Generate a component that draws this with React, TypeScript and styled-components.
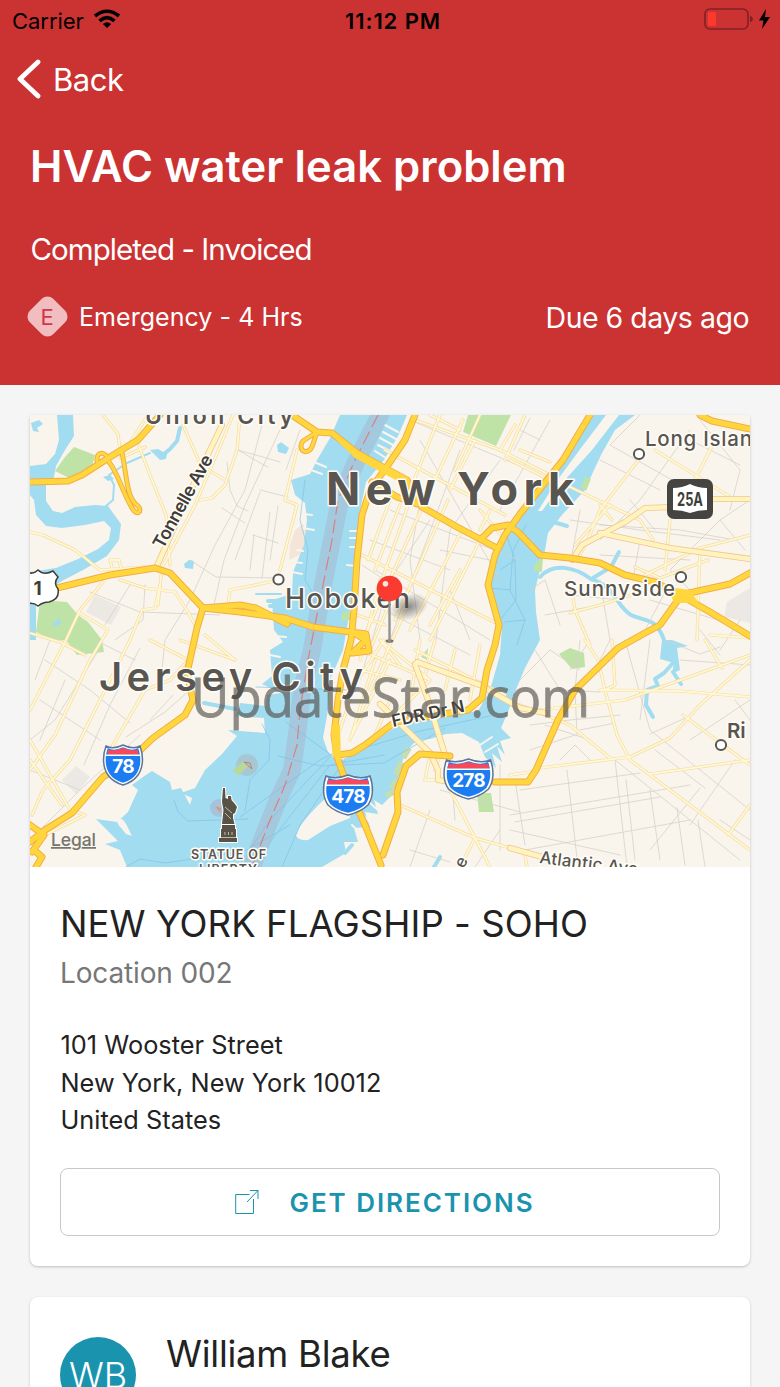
import styled, { createGlobalStyle } from "styled-components";

const WATER = "#a2dcf0";
const LAND = "#f9f5ed";

const waterShapes = [
  // hudson, upper bay and east river
  "M340 415 L407 415 L398 436 L384 460 L366 482 L359 515 L355 560 L352 600 L343 650 L330 680 L328 710 L323 738 L328 752 L338 762 L368 746 L398 725 L440 717 L478 711 L490 690 L500 655 L502 625 L490 600 L487 575 L498 550 L510 530 L522 508 L547 478 L570 449 L594 415 L635 415 L615 430 L601 455 L594 470 L585 490 L562 515 L548 533 L545 550 L541 566 L535 590 L536 612 L540 640 L525 668 L515 692 L508 712 L501 728 L511 738 L500 741 L505 755 L497 746 L502 762 L492 753 L496 768 L485 757 L479 742 L462 733 L446 734 L430 739 L416 741 L405 752 L399 775 L392 795 L382 805 L374 800 L378 814 L365 812 L370 827 L354 828 L358 842 L344 842 L346 853 L322 867 L127 867 L120 850 L105 844 L118 841 L107 830 L96 819 L117 822 L128 812 L138 790 L132 785 L143 777 L152 771 L170 782 L172 790 L181 788 L190 805 L192 798 L181 793 L195 788 L205 770 L222 754 L237 736 L228 730 L265 733 L264 718 L236 716 L240 703 L266 706 L267 695 L281 693 L262 684 L272 676 L270 650 L283 642 L274 630 L272 600 L292 594 L293 572 L304 545 L307 520 L305 503 L295 495 L291 480 L310 474 L317 460 L330 438 Z",
  // hackensack
  "M57 415 L73 415 L74 436 L65 450 L56 466 L54 477 L46 484 L46 501 L53 511 L62 513 L75 507 L95 505 L108 506 L121 524 L119 540 L107 556 L83 570 L60 582 L50 590 L30 590 L30 572 L56 568 L78 559 L98 549 L109 540 L111 528 L104 521 L85 525 L62 528 L46 526 L36 515 L34 500 L30 495 L30 466 L46 464 L55 454 L59 440 Z",
  "M30 604 L36 600 L36 640 L30 640 Z",
  "M31 423 L39 420 L43 424 L37 428 L39 432 L33 431 Z",
  "M150 450 L158 449 L167 454 L166 459 L160 460 Z",
  "M103 477 L110 475 L114 479 L108 481 Z",
  "M184 564 L189 560 L194 561 L193 569 L185 568 Z",
  "M277 445 L281 442 L289 448 L286 454 L278 452 Z",
  "M662 640 L672 640 L688 646 L677 648 L680 670 L672 674 L674 663 L660 659 Z",
];

const shoreLand = [
  // roosevelt island
  "M606 415 L619 415 L592 450 L563 482 L542 511 L538 511 L556 482 L581 448 Z",
  "M297 833 C299 826 310 812 326 798 L350 802 L350 818 L330 826 L308 840 C300 841 294 837 297 833 Z",
  "M117 820 C124 815 127 827 132 836 L126 834 C121 827 117 825 117 820 Z",
];

const parks = [
  "M55 471 L65 457 L74 447 L95 455 L92 467 L69 478 Z",
  "M40 600 L67 602 L78 615 L88 622 L102 640 L104 652 L77 655 L66 640 L55 641 L36 632 Z",
  "M468 415 L511 415 L496 446 L463 432 Z",
  "M559 654 L570 648 L584 653 L585 667 L572 669 Z",
  "M477 793 L491 793 L494 812 L479 812 Z",
  "M342 612 L350 611 L351 620 L342 621 Z",
  "M581 487 L585 477 L591 479 L586 491 Z",
  "M534 565 L543 556 L542 572 L534 571 Z",
  "M421 657 L428 648 L427 660 Z",
];

// brooklyn bridge park piers
const pierParks = "M409 748 L403 758 M401 762 L396 775 M397 780 L391 788 M393 792 L386 796";

const greyBlocks = [
  "M86 612 L95 595 L121 607 L111 625 Z",
  "M727 602 L750 588 L750 623 L724 617 Z",
  "M62 780 L76 766 L90 777 L76 794 Z",
];

const creeks = [
  "M180 428 L177 441 L170 449 L164 454",
  "M540 577 C553 562 575 567 591 579 C617 588 615 605 631 615 C646 622 656 617 664 640",
  "M593 578 L611 567 L619 552",
  "M673 663 L664 673 L655 679 L658 686 L647 690 L646 705 L653 717",
  "M673 672 L681 684",
  "M553 522 L567 526",
];

const ferryRoutes = [
  "M174 800 L178 812 L188 821 L248 819",
  "M262 724 L270 740 L269 760 L250 780 L245 811",
  "M126 867 L140 859 L165 863 L245 851 L290 825",
  "M240 817 L320 760 L336 752",
  "M238 867 L270 820 L330 757",
  "M282 867 L300 825 L345 760",
  "M270 842 L330 765 L384 755",
  "M286 722 L334 757 L420 731 L490 716",
  "M278 756 L320 766 L384 763 L445 728",
  "M256 687 L350 690",
  "M503 525 L515 560 L516 600 L500 620",
  "M526 525 L513 551 L510 590 L525 620 L517 645",
  "M515 560 L500 570 M510 590 L490 588 M525 620 L505 622",
  "M305 480 L300 520 L308 550 L305 580 L317 600",
];

const streets = [
  "M238 450 L262 464 L268 467 M227 462 L230 490 L237 506 L248 511",
  "M262 425 L245 490 L215 545 L190 600 L165 640 L160 690",
  "M280 430 L245 505 L224 560 L214 605 M238 450 L280 462",
  "M222 508 L245 523 M260 490 L288 497 M190 560 L216 577 L280 578",
  "M260 492 L235 560 M253 535 L278 543 M250 570 L254 535 M270 512 L262 578 M278 506 L270 560",
  "M90 592 L140 612 L220 615 M145 585 L143 620 L115 640 M130 585 L105 625",
  "M50 640 L35 680 M45 660 L90 690 L130 723 M100 648 L55 720 L30 740",
  "M40 700 L100 740 M95 640 L135 660 M150 720 L173 695 M126 737 L165 712 L190 690",
  "M140 648 L110 705 L84 765 M65 680 L40 740 M30 770 L80 790",
  "M300 430 L286 470 M30 840 L80 790 L140 735",
  "M410 420 L530 470 M420 440 L500 580 M390 510 L520 560 M370 540 L450 570",
  "M362 565 L400 590 M430 520 L390 580 L360 680 M450 590 L470 640",
  "M440 550 L490 560 M420 500 L410 560 L420 640 M460 450 L390 640",
  "M500 460 L450 530 L436 640 M375 570 L490 640 M365 600 L470 655",
  "M530 418 L514 450 M550 420 L500 510 M540 440 L520 430",
  "M640 415 L610 445 L690 490 M600 460 L660 490 M690 430 L640 500 L600 540",
  "M700 420 L740 470 L730 510 M690 440 L740 465 M750 500 L720 520 L745 550",
  "M570 520 L640 530 L720 540 M580 510 L572 555 M630 500 L655 530",
  "M600 525 L680 530 L735 540 M600 555 L690 560",
  "M640 540 L633 580 M720 520 L670 570 L690 590 M530 590 L545 580 L560 625",
  "M570 595 L620 600 M545 615 L600 605 M600 580 L610 640 L590 680",
  "M665 592 L640 640 M650 600 L735 625 M700 630 L720 655 M740 620 L720 650",
  "M520 680 L550 650 L580 670 M535 650 L560 690 L600 692",
  "M580 640 L575 690 L577 735 M625 640 L650 730 L750 810 M680 660 L750 665",
  "M530 725 L570 720 L620 715 M580 730 L615 723 M560 760 L575 745 L590 760",
  "M520 790 L640 773 M510 815 L690 785 M515 822 L660 797 M525 850 L690 820",
  "M515 780 L525 845 M567 770 L578 867 M615 760 L627 867 M626 780 L635 860",
  "M650 790 L660 860 M677 808 L685 865 M698 820 L705 867 M615 760 L740 860",
  "M690 740 L750 700 M735 760 L690 825 M655 750 L705 788 M720 820 L750 840",
  "M650 640 L640 720 M500 765 L500 850 M440 790 L520 812 M430 810 L410 867",
  "M450 755 L455 820 M410 850 L450 862 M500 830 L475 867 M510 830 L620 855",
  "M650 734 L690 716 M665 640 L700 654 L720 647 M590 640 L570 670",
  "M545 725 L590 740 M735 700 L750 720 M700 788 L650 850 M530 750 L575 735",
];

const minorRoads = [
  "M103 415 L118 434 L121 458 L145 447 M148 415 L120 458",
  "M139 446 L150 475 L166 515 L170 565",
  "M183 425 L205 475 M240 415 L237 450 L225 485 L212 498 L200 500",
  "M233 415 L208 475 L195 505 L162 568 L158 605",
  "M212 472 L225 480",
  "M30 532 L43 535 L75 550 L100 570 L145 567 M103 582 L80 610 L66 640 L30 710",
  "M112 568 L110 560 L119 560 L121 568 M160 585 L155 608 L142 610 L130 640 L70 760 L43 790 L32 815",
  "M78 612 L108 630 L90 660 L55 735 L30 770",
  "M30 633 L60 642 L85 655 M120 580 L145 588 L175 592 L188 612 L195 625",
  "M230 590 L280 580 M230 590 L227 612 M180 640 L235 660 L205 635",
  "M150 640 L188 660 L170 680 L145 690 L110 750",
  "M30 740 L70 810 L85 815 L45 835 M30 760 L62 805",
  "M297 450 L285 500 L297 505 L280 570",
  "M415 420 L500 450 L550 475 M480 415 L455 470 M440 415 L410 490",
  "M463 420 L430 490 M475 440 L450 490 M430 415 L460 430 M500 450 L515 425",
  "M510 460 L550 480 M520 450 L550 462 M525 415 L505 460",
  "M385 450 L440 480 L505 515 M430 490 L365 635 M448 500 L395 620",
  "M462 530 L410 630 M390 500 L368 560 M400 505 L375 570",
  "M362 555 L500 625 M410 500 L382 580 M480 540 L430 640",
  "M460 570 L430 625 M480 510 L505 540 M490 510 L480 530",
  "M380 580 L360 660 M395 590 L370 650 M410 600 L370 690",
  "M357 615 L385 625 M360 650 L430 680 M380 640 L430 680 L400 710",
  "M375 660 L350 740 M390 660 L352 735 M400 680 L360 670 L340 730",
  "M415 650 L505 695 M420 640 L410 700 L395 715 M455 650 L445 690",
  "M435 640 L425 675 M480 645 L470 700 M400 665 L380 640",
  "M640 458 L600 510 L590 535 L580 555 M570 487 L640 520 L653 540",
  "M610 505 L575 545 M600 505 L612 520 M655 450 L735 500",
  "M715 440 L690 490 M670 520 L665 570",
  "M645 575 L700 548 L750 535 M700 548 L697 640 M635 567 L660 578 L708 560",
  "M570 580 L575 610 L590 645 M570 613 L600 605 L640 592",
  "M585 640 L598 660 L605 690 L617 735 L630 760 L750 850",
  "M612 640 L615 685 L605 690 M600 690 L680 691 L750 697",
  "M540 710 L625 700 L750 655 M540 768 L630 757 L670 738 L700 705 L750 660",
  "M705 640 L722 668 M683 715 L750 765 M650 774 L750 760 M728 835 L750 805",
  "M510 775 L530 772 M520 705 L570 725 L610 758",
  "M430 755 L425 780 L440 780 M440 755 L435 770 M400 805 L475 838 L570 865",
  "M450 790 L475 838 L490 867 M475 838 L460 867 M525 855 L527 867",
  "M390 700 L375 735 M384 640 L345 700 M710 635 L750 638",
];

const mainRoads = [
  "M222 425 L190 492 L156 568",
  "M415 664 L428 700 L445 755",
  "M417 662 L480 685 L520 708 L545 713",
  "M380 704 L430 753 L438 770 L438 780 L450 782",
  "M572 560 L582 545 L625 522 L645 508 L675 507 M713 499 L750 499",
  "M600 533 L670 548 L750 559",
  "M510 848 L560 862",
];

const highways = [
  "M30 482 L68 481 L82 475 L110 457 L138 440 L160 415",
  "M57 588 L110 575 L155 568 L170 573 L203 608 L240 605 L256 608 L287 624",
  "M203 608 L240 612 L285 618 L313 627 L366 634 L369 651 L352 653 L366 640 L352 632",
  "M203 608 L197 628 L187 673 L193 700 L185 715 L153 738 L130 760 L103 777 L72 813 L45 830 L30 842",
  "M292 415 L317 432 L332 433 L357 453 L407 480 L422 507 L457 527 L495 547",
  "M372 482 L397 497 L417 504",
  "M415 415 L405 440 L388 465 L370 490 L362 515 L357 560 L354 610 L351 640 L343 670 L338 700 L334 735 L337 757 L347 785 L365 825 L381 865",
  "M590 415 L563 460 L547 480 L520 514 L505 535 L495 555 L488 585 L499 625 L495 645 L487 670 L482 698 L468 710 L420 718 L395 722 L365 745 L352 753 L338 755",
  "M482 538 L492 528 L508 525 L518 532 L540 555 L570 558 L600 563 L625 575 L655 582 L680 595 L710 612 L750 636",
  "M680 595 L730 584 L750 573",
  "M680 597 L660 625 L645 633 L618 648 L575 690 L558 720 L536 770 L528 782 L495 782",
  "M450 756 L420 754 L406 766 L397 792 L398 812 L383 855",
  "M700 415 L712 421 L750 429",
  "M30 825 L44 835 L32 852 M34 850 L42 857 L36 867",
];

const ramps = [
  "M97 461 C96 450 107 451 109 462 C119 475 122 491 132 508 C137 517 143 511 138 506 C126 498 127 475 122 453",
  "M317 432 L303 441 C296 450 309 458 313 444 L317 432",
];

const shields = [
  { x: 123, y: 765, w: 40, label: "78" },
  { x: 348, y: 795, w: 50, label: "478" },
  { x: 468.5, y: 779, w: 50, label: "278" },
];

const dots = [
  [278.5, 579.5],
  [639, 454],
  [681, 577],
  [721, 745],
];

const Shield = ({ x, y, w, label }: (typeof shields)[number]) => {
  const h = w / 2;
  const body = `M${-h + 3} -19 Q${-h / 2} -15 0 -20 Q${h / 2} -15 ${h - 3} -19 C${h + 1} -8 ${h} 3 ${h - 5} 10 Q${h / 2} 17 0 20 Q${-h / 2} 17 ${-h + 5} 10 C${-h} 3 ${-h - 1} -8 ${-h + 3} -19 Z`;
  return (
    <g transform={`translate(${x} ${y})`}>
      <path d={body} fill="#fff" stroke="#5d7599" strokeWidth="1.5" />
      <path d={body} fill="#1c7cf2" transform="scale(.89)" />
      <path
        d={`M${-h + 5} -15.5 Q${-h / 2} -13 0 -17 Q${h / 2} -13 ${h - 5} -15.5 L${h - 4.5} -10.5 H${-h + 4.5} Z`}
        fill="#f9485a"
      />
      <path d={`M${-h + 3} -9.7 H${h - 3}`} stroke="#fff" strokeWidth="1.5" />
      <ShieldText y={7.5}>{label}</ShieldText>
    </g>
  );
};

const CityMap = () => (
  <MapSvg viewBox="30 415 720 452" role="img" aria-label="Map">
    <rect x="30" y="415" width="720" height="452" fill={LAND} />
    {greyBlocks.map((d) => (
      <path key={d} d={d} fill="#ece9e4" />
    ))}
    <path d="M295 530 L303 524 L309 540 L304 553 L289 560 L290 545 Z" fill="#f3e6d8" />
    {waterShapes.map((d) => (
      <path key={d} d={d} fill={WATER} />
    ))}
    {shoreLand.map((d) => (
      <path key={d} d={d} fill={LAND} />
    ))}
    {parks.map((d) => (
      <path key={d} d={d} fill="#bfe3a6" />
    ))}
    <path d={pierParks} stroke="#c3dfb0" strokeWidth="6" />
    <path d="M52 624 L60 618 L61 623 L55 627 Z" fill={WATER} />

    {/* piers */}
    <Lines stroke={LAND} strokeWidth="2">
      <path d="M385 425 L398 432 M383 432 L396 439 M380 438 L393 445 M378 445 L390 451 M375 451 L386 458 M314 462 L326 467 M311 470 L322 474 M304 514 L312 515 M303 528 L314 530 M297 550 L303 551 M294 562 L302 563 M292 572 L302 574 M350 531 L360 531 M350 538 L360 538 M350 547 L358 547 M347 565 L356 566" />
      <path d="M480 745 L492 737 M485 752 L498 744 M370 803 L380 812 M361 813 L371 823 M352 825 L362 835" />
      <path d="M274 636 L286 637 M270 655 L280 657 M270 606 L280 607" />
    </Lines>

    <Lines stroke={WATER} strokeWidth="4">
      {creeks.map((d) => (
        <path key={d} d={d} />
      ))}
      <path d="M268 601 H281 M270 606 H282 M204 703 L235 709 M345 853 L352 845 M434 867 L440 857" />
    </Lines>
    <Lines stroke={WATER} strokeWidth="2">
      <path d="M150 453 L127 463 L109 475 L114 485 L113 500 L106 506 M256 594 H281" />
    </Lines>
    <Lines stroke="#7fc2e6" strokeWidth="0.9" opacity="0.75">
      {ferryRoutes.map((d) => (
        <path key={d} d={d} />
      ))}
    </Lines>

    {/* state line down the river */}
    <Lines stroke="#a6abc6" strokeWidth="18" opacity="0.42">
      <path d="M380 415 L356 462 L340 500 L332 540 L324 580 L317 620 L312 650 L302 690 L297 735 L292 770 L278 800 L262 840 L252 867" />
    </Lines>
    <Lines stroke="#d8817f" strokeWidth="1.2" strokeDasharray="13 6">
      <path d="M378 415 L354 462 L338 500 L332 540 L323 585 L315 625 L308 660 L300 710 L297 745 L285 785 L270 820 L252 867" />
    </Lines>
    <circle cx="247" cy="765" r="11" fill="#a9b8ba" opacity="0.55" />
    <path d="M233 770 L243 762 L248 766 L238 776 Z" fill="#b9d99b" />
    <path d="M244 762 L250 763 L252 769 Z" fill="none" stroke="#c98268" />
    <circle cx="219" cy="808" r="9" fill="#a9a9c8" opacity="0.5" />
    <path d="M215 806 L221 808 L220 813 Z" fill="#d99a79" />

    <Lines stroke="#d6d2ca" strokeWidth="0.8">
      {streets.map((d) => (
        <path key={d} d={d} />
      ))}
    </Lines>
    <Lines stroke="#f5dca6" strokeWidth="3.2">
      {minorRoads.map((d) => (
        <path key={d} d={d} />
      ))}
    </Lines>
    <Lines stroke="#fff8d2" strokeWidth="1.8">
      {minorRoads.map((d) => (
        <path key={d} d={d} />
      ))}
    </Lines>
    <Lines stroke="#f2c58d" strokeWidth="6.2">
      {mainRoads.map((d) => (
        <path key={d} d={d} />
      ))}
    </Lines>
    <Lines stroke="#fff3be" strokeWidth="4.6">
      {mainRoads.map((d) => (
        <path key={d} d={d} />
      ))}
    </Lines>
    <Lines stroke="#f2ad45" strokeWidth="7">
      {highways.map((d) => (
        <path key={d} d={d} />
      ))}
    </Lines>
    <Lines stroke="#f2ad45" strokeWidth="5">
      {ramps.map((d) => (
        <path key={d} d={d} />
      ))}
    </Lines>
    <Lines stroke="#ffd63c" strokeWidth="3">
      {ramps.map((d) => (
        <path key={d} d={d} />
      ))}
    </Lines>
    <Lines stroke="#ffd63c" strokeWidth="5">
      {highways.map((d) => (
        <path key={d} d={d} />
      ))}
    </Lines>
    <path
      d="M668 587 L690 590 L698 602 L683 603 L674 603 Z M328 432 L365 455 L409 478 L405 485 L355 458 Z M331 725 L340 725 L341 760 L333 757 Z"
      fill="#ffd63c"
    />

    <MapLabel x="145" y="423.5" $size={23} textLength="148">Union City</MapLabel>
    <MapLabel x="326" y="504.5" $size={45} $weight={700} textLength="248">New York</MapLabel>
    <MapLabel x="99" y="690.5" $size={40} textLength="264">Jersey City</MapLabel>
    <MapLabel x="285" y="607.5" $size={27} $weight={500} textLength="125">Hoboken</MapLabel>
    <MapLabel x="564" y="595.5" $size={20.5} $weight={500} textLength="111">Sunnyside</MapLabel>
    <MapLabel x="645" y="446" $size={20.5} $weight={500} textLength="107">Long Islan</MapLabel>
    <MapLabel x="727" y="737.5" $size={20.5}>Ri</MapLabel>
    <MapLabel transform="translate(163 550) rotate(-61)" $size={18} textLength="104" $color="#3f3d39">
      Tonnelle Ave
    </MapLabel>
    <MapLabel transform="translate(393 727) rotate(-12)" $size={17} textLength="74" $color="#3f3d39">
      FDR Dr N
    </MapLabel>
    <MapLabel transform="translate(539 863) rotate(7)" $size={17} $weight={500} textLength="99">
      Atlantic Ave
    </MapLabel>
    <MapLabel transform="translate(464 869) rotate(-65)" $size={17} $weight={500}>e</MapLabel>
    <MapLabel x="191" y="859" $size={12.5} textLength="75">STATUE OF</MapLabel>
    <MapLabel x="199" y="874" $size={12.5} textLength="58">LIBERTY</MapLabel>
    <LegalLabel x="51" y="846" textLength="45">Legal</LegalLabel>

    {dots.map(([cx, cy]) => (
      <circle key={cx} cx={cx} cy={cy} r="5.1" fill="#fff" stroke="#595550" strokeWidth="2" />
    ))}
    {shields.map((s) => (
      <Shield key={s.label} {...s} />
    ))}

    <path
      d="M27 572 Q33 575 38 570 Q44 576 53 571 L58 577 Q53 583 58 589 Q60 599 49 602 Q43 602 38 606 Q33 602 27 604 Z"
      fill="#fff"
      stroke="#403e3b"
      strokeWidth="1.5"
    />
    <RouteText x="37.5" y="595">1</RouteText>
    <rect x="667" y="479" width="46" height="40" rx="7" fill="#464440" />
    <path d="M673 488 Q682 488 690 484 Q698 488 707 488 V510 Q698 510 690 513 Q682 510 673 510 Z" fill="#fff" />
    <RouteText x="690" y="505.5" textLength="26" lengthAdjust="spacingAndGlyphs">25A</RouteText>

    {/* statue of liberty */}
    <g fill="#595347" stroke="#fff" strokeWidth="2" paintOrder="stroke">
      <path d="M223 788 L225 788 L225.500 798 L228 799 L228 796 L231 796 L231.500 800 L235 804 L237 807 L235 813 L233 814 L233 818 L234.500 824 H222 L223.500 810 L222 802 Z" />
      <path d="M222 825 H235 V829 H236 V838 H237 V842 H219 V838 H221 V829 H222 Z" />
    </g>
    <path d="M225 807 L232 813 M225 813 L231 819 M225 832 V835 M228.500 832 V835 M232 832 V835 M221 837.500 H236" stroke="#d9d5c7" strokeWidth="0.8" />

    <Watermark x="191" y="716.5" textLength="399" lengthAdjust="spacingAndGlyphs">UpdateStar.com</Watermark>

    {/* pin */}
    <defs>
      <radialGradient id="pinShadow">
        <stop offset="0" stopColor="#454545" stopOpacity="0.6" />
        <stop offset="1" stopColor="#454545" stopOpacity="0" />
      </radialGradient>
    </defs>
    <ellipse cx="409" cy="607" rx="20" ry="13" fill="url(#pinShadow)" transform="rotate(-20 409 607)" />
    <ellipse cx="389.5" cy="641" rx="4" ry="1.8" fill="#77736d" />
    <path d="M389.5 599 V642" stroke="#96938f" strokeWidth="2.4" />
    <circle cx="389.5" cy="588.5" r="12.8" fill="#fb3a30" />
    <circle cx="385.5" cy="583.8" r="2.8" fill="#ffe3df" />
  </MapSvg>
);

const App = () => {
  return (
    <Page>
      <GlobalStyle />
      <Header>
        <StatusBar>
          <Carrier>
            <Text $size={22} $spacing={-0.05}>Carrier</Text>
            <svg width="28" height="20" viewBox="0 0 28 20">
              <g fill="none" stroke="#000" strokeWidth="3.6">
                <path d="M2 7 Q14 -2.500 26 7" />
                <path d="M6.5 11.800 Q14 5.500 21.5 11.800" />
              </g>
              <path d="M9.8 15 Q14 11.5 18.2 15 L14 19 Z" />
            </svg>
          </Carrier>
          <Text $size={22} $weight={600} $spacing={0.9}>11:12 PM</Text>
          <Battery>
            <svg width="66" height="24" viewBox="0 0 66 24">
              <rect x="1" y="2" width="43" height="20" rx="5" fill="none" stroke="#812025" strokeWidth="1.6" />
              <rect x="4" y="5" width="8" height="14" rx="1.5" fill="#fd392f" />
              <path d="M46 8.5 Q49 10 49 12 Q49 14 46 15.5 Z" fill="#812025" />
              <path d="M62 2 L55 13.500 H59.500 L58 22 L66 10 H61 Z" fill="#000" />
            </svg>
          </Battery>
        </StatusBar>
        <BackButton>
          <svg width="24" height="40" viewBox="0 0 24 40">
            <path d="M21 3 L3 20 L21 37" fill="none" stroke="#fff" strokeWidth="4.8" strokeLinecap="round" strokeLinejoin="round" />
          </svg>
          <Text $size={31} $spacing={-0.5}>Back</Text>
        </BackButton>
        <Title>HVAC water leak problem</Title>
        <Status>Completed - Invoiced</Status>
        <PriorityRow>
          <Priority>
            <Badge>
              <span>E</span>
            </Badge>
            <Text $size={25} $spacing={0.05}>Emergency - 4 Hrs</Text>
          </Priority>
          <Text $size={28.5} $spacing={-0.5}>Due 6 days ago</Text>
        </PriorityRow>
      </Header>

      <Content>
        <Card>
          <CityMap />
          <CardBody>
            <SiteName>NEW YORK FLAGSHIP - SOHO</SiteName>
            <Location>Location 002</Location>
            <Address>
              <div>101 Wooster Street</div>
              <div>New York, New York 10012</div>
              <div>United States</div>
            </Address>
            <DirectionsButton>
              <svg width="24" height="26" viewBox="0 0 24 26">
                <path d="M14.500 5.500 H.700 V24.500 H18.500 V10 M15 1.500 H23 V10 M23 1.500 L12 13" fill="none" stroke="#1b93ae" strokeWidth="1" />
              </svg>
              GET DIRECTIONS
            </DirectionsButton>
          </CardBody>
        </Card>
        <ContactCard>
          <Avatar>WB</Avatar>
          <ContactName>William Blake</ContactName>
        </ContactCard>
      </Content>
    </Page>
  );
};

export default App;

// STYLED COMPONENTS

const GlobalStyle = createGlobalStyle`
  * {
    box-sizing: border-box;
  }

  body {
    margin: 0;
    background: #f5f5f5;
    font-family: Inter, "Liberation Sans", sans-serif;
  }
`;

const Page = styled.div`
  width: 780px;
  height: 1387px;
  overflow: hidden;
  background: #f5f5f5;
`;

const Text = styled.span<{ $size: number; $weight?: number; $spacing: number }>`
  font-size: ${({ $size }) => $size}px;
  font-weight: ${({ $weight }) => $weight ?? 400};
  letter-spacing: ${({ $spacing }) => $spacing}px;
  white-space: nowrap;
`;

const Header = styled.header`
  height: 384.5px;
  background: #cb3232;
  color: #fff;
`;

const StatusBar = styled.div`
  display: grid;
  grid-template-columns: 1fr auto 1fr;
  align-items: center;
  height: 41px;
  padding: 0 10px 0 12px;
  color: #000;

  > span {
    padding-left: 4px;
  }
`;

const Carrier = styled.div`
  display: flex;
  align-items: center;
  gap: 9px;

  svg {
    margin-top: -3px;
  }
`;

const Battery = styled.div`
  display: flex;
  justify-content: flex-end;
  margin-top: -3px;
`;

const BackButton = styled.div`
  display: flex;
  align-items: center;
  gap: 12px;
  height: 76px;
  padding-left: 17px;
`;

const Title = styled.h1`
  margin: 18px 0 0 30px;
  font-size: 43.5px;
  font-weight: 600;
  line-height: 62px;
  letter-spacing: 0.05px;
  white-space: nowrap;
`;

const Status = styled.div`
  margin: 32px 0 0 30.5px;
  font-size: 29.5px;
  line-height: 40px;
  letter-spacing: -0.95px;
`;

const PriorityRow = styled.div`
  display: flex;
  align-items: center;
  justify-content: space-between;
  height: 40px;
  margin: 28px 31px 0 27px;
`;

const Priority = styled.div`
  display: flex;
  align-items: center;
  gap: 15.5px;
  margin: -1px 0 0 3.5px;
`;

const Badge = styled.div`
  display: flex;
  align-items: center;
  justify-content: center;
  width: 33px;
  height: 33px;
  border-radius: 8px;
  background: #f1bdc0;
  color: #d0384a;
  font-size: 22px;
  transform: rotate(45deg);

  span {
    transform: rotate(-45deg);
  }
`;

const Content = styled.main`
  display: flex;
  flex-direction: column;
  gap: 31px;
  padding: 30.5px 30px 0;
`;

const Card = styled.section`
  height: 851px;
  overflow: hidden;
  border-radius: 4px 4px 8px 8px;
  background: #fff;
  box-shadow: 0 1px 3px rgba(0, 0, 0, 0.22);
`;

const CardBody = styled.div`
  padding: 32px 30px 0;
`;

const SiteName = styled.h2`
  margin: 0;
  color: #222;
  font-size: 36.5px;
  font-weight: 400;
  line-height: 50px;
  letter-spacing: 0.08px;
  white-space: nowrap;
`;

const Location = styled.div`
  color: #777;
  font-size: 28px;
  line-height: 48px;
  letter-spacing: -0.15px;
`;

const Address = styled.div`
  margin: 29px 0 0 0.5px;
  color: #222;
  font-size: 25.3px;
  line-height: 37.7px;
  letter-spacing: 0.03px;
`;

const DirectionsButton = styled.button`
  display: flex;
  align-items: center;
  justify-content: center;
  gap: 30px;
  width: 660px;
  height: 68px;
  padding: 0 10px 0 0;
  margin-top: 29px;
  border: 1px solid #c8c8c8;
  border-radius: 8px;
  background: #fff;
  color: #1b93ae;
  font-family: inherit;
  font-size: 26px;
  font-weight: 600;
  letter-spacing: 1.95px;
`;

const ContactCard = styled.section`
  display: flex;
  gap: 30px;
  height: 200px;
  padding: 40px 30px;
  border-radius: 8px;
  background: #fff;
  box-shadow: 0 1px 3px rgba(0, 0, 0, 0.18);
`;

const Avatar = styled.div`
  display: flex;
  align-items: center;
  justify-content: center;
  width: 76px;
  height: 76px;
  border-radius: 50%;
  background: #1a94ae;
  color: #fff;
  font-size: 36px;
  font-weight: 300;
`;

const ContactName = styled.div`
  margin-top: -8px;
  color: #222;
  font-size: 36.5px;
  line-height: 50px;
  letter-spacing: -0.25px;
`;

const MapSvg = styled.svg`
  display: block;
  width: 720px;
  height: 452px;
`;

const Lines = styled.g`
  fill: none;
  stroke-linecap: round;
  stroke-linejoin: round;
`;

const MapLabel = styled.text<{ $size: number; $weight?: number; $color?: string }>`
  fill: ${({ $color }) => $color ?? "#595550"};
  stroke: #fffdf8;
  stroke-width: 3px;
  stroke-linejoin: round;
  paint-order: stroke;
  font-family: Inter, sans-serif;
  font-size: ${({ $size }) => $size}px;
  font-weight: ${({ $weight }) => $weight ?? 600};
`;

const LegalLabel = styled.text`
  fill: #77736d;
  font-size: 17.5px;
  font-weight: 500;
  text-decoration: underline;
`;

const ShieldText = styled.text`
  fill: #fff;
  font-size: 19px;
  font-weight: 700;
  letter-spacing: -0.8px;
  text-anchor: middle;
`;

const RouteText = styled.text`
  fill: #403e3b;
  font-size: 19px;
  font-weight: 700;
  text-anchor: middle;
`;

const Watermark = styled.text`
  fill: #55514d;
  stroke: #55514d;
  stroke-width: 0.8px;
  opacity: 0.65;
  font-family: "Open Sans", "Noto Sans", sans-serif;
  font-size: 54px;
`;
